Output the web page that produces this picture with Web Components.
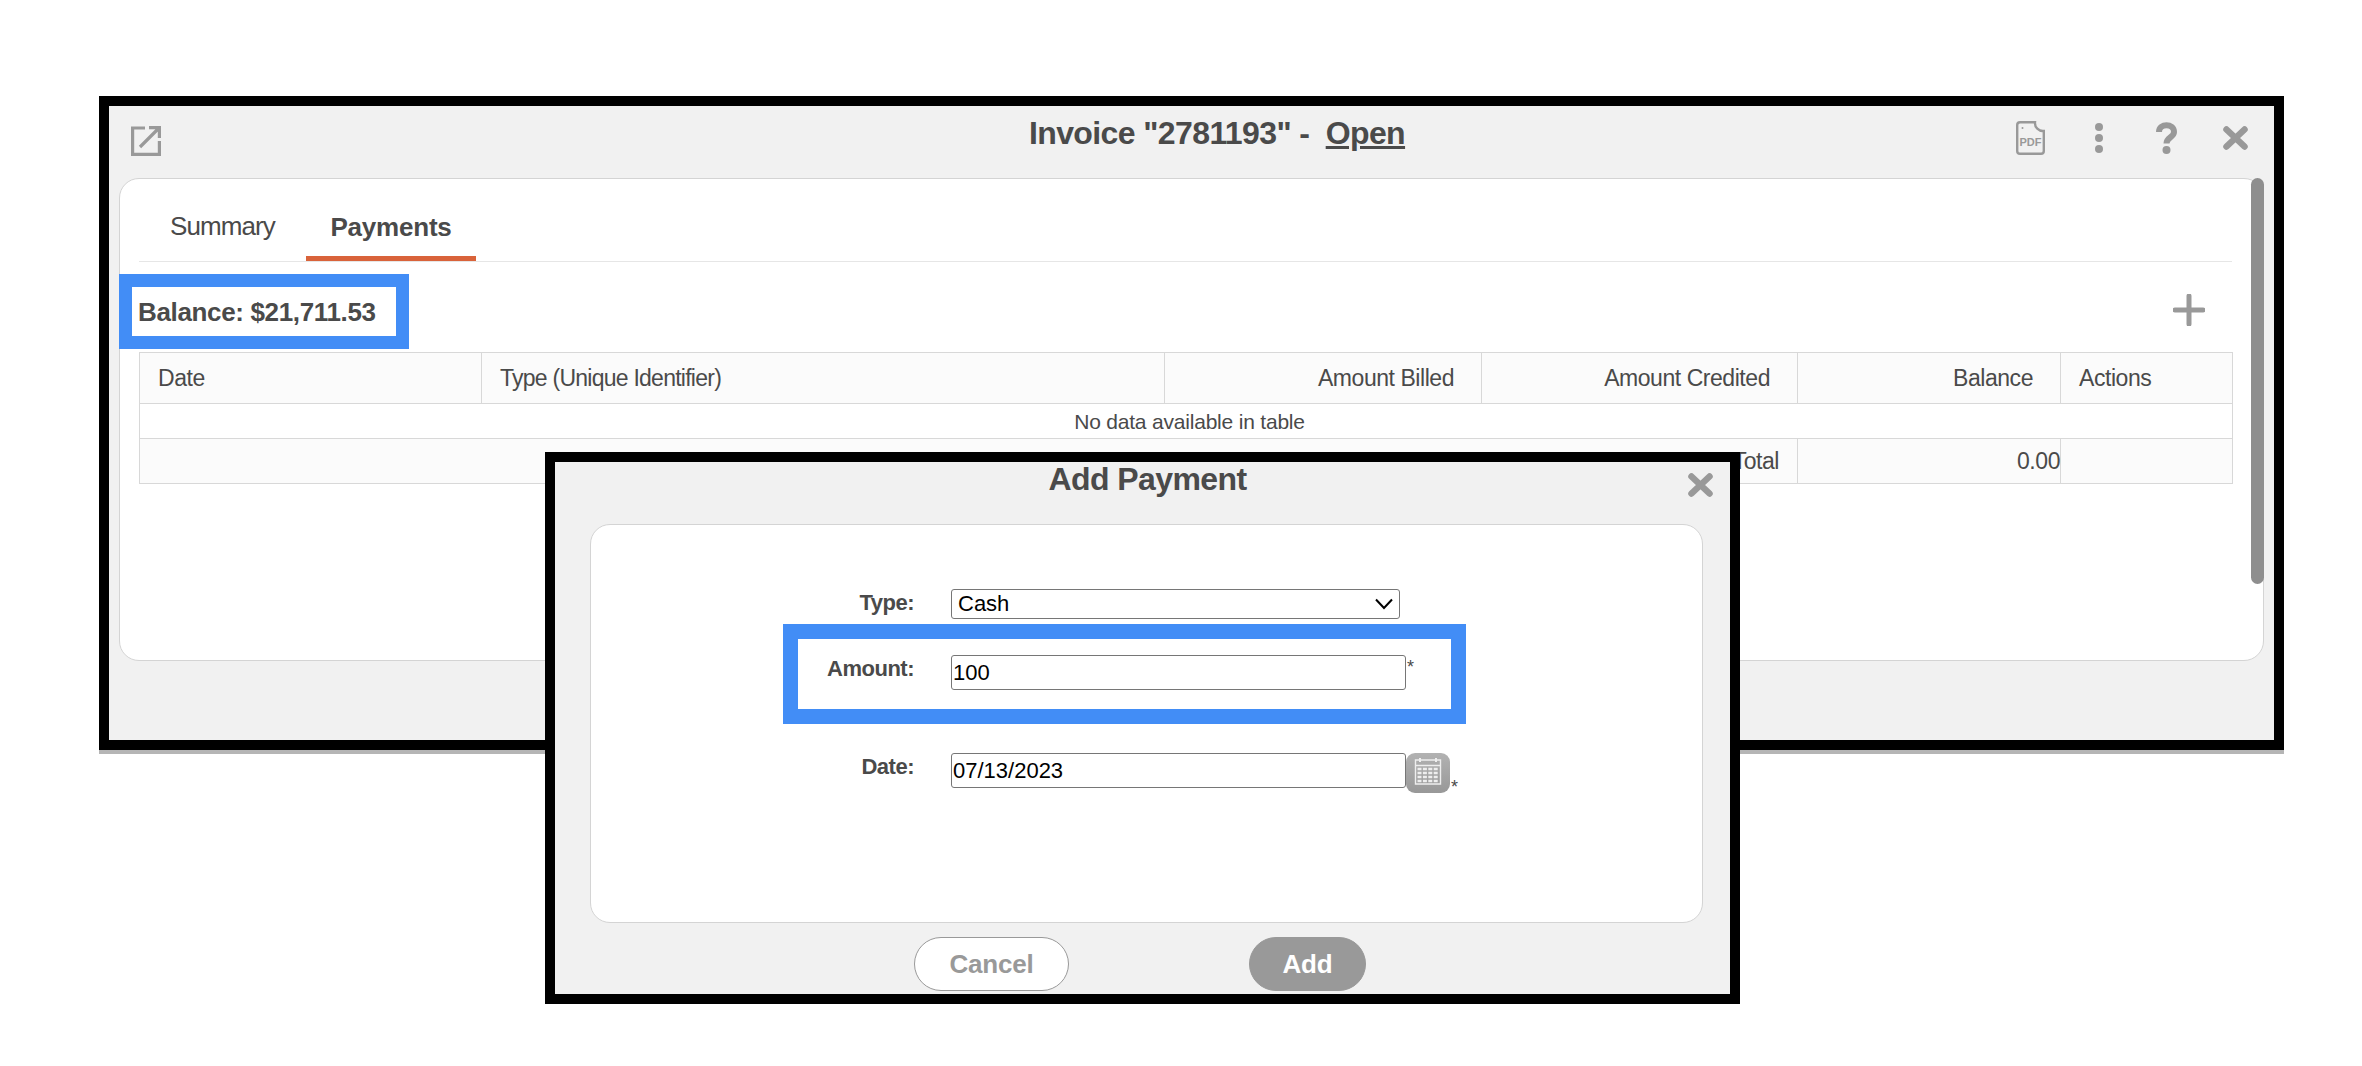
<!DOCTYPE html>
<html>
<head>
<meta charset="utf-8">
<title>Invoice</title>
<style>
  html, body { margin: 0; padding: 0; background: #fff; }
  body { width: 2362px; height: 1066px; position: relative; overflow: hidden; font-family: "Liberation Sans", Arial, sans-serif; color: #4a4a4a; }
</style>
</head>
<body>
<invoice-window>
  <window-header slot="header"></window-header>
  <payments-panel></payments-panel>
</invoice-window>
<payment-dialog></payment-dialog>

<script>
const CLOSE_ICON = `<svg class="close" width="25" height="24" viewBox="0 0 25 24"><path d="M3.5 3.500 L21.500 20.500 M21.500 3.500 L3.500 20.500" stroke="#999" stroke-width="6.500" stroke-linecap="round"/></svg>`;

class InvoiceWindow extends HTMLElement {
  constructor() {
    super();
    this.attachShadow({ mode: "open" }).innerHTML = `
      <style>
        :host {
          display: flex;
          flex-direction: column;
          position: absolute;
          left: 99px;
          top: 96px;
          width: 2185px;
          height: 654px;
          box-sizing: border-box;
          border: 10px solid #000;
          background: #f1f1f1;
          box-shadow: 0 4px 0 #b5b5b5;
        }
      </style>
      <slot name="header"></slot>
      <slot></slot>
    `;
  }
}

class WindowHeader extends HTMLElement {
  constructor() {
    super();
    this.attachShadow({ mode: "open" }).innerHTML = `
      <style>
        :host {
          display: flex;
          align-items: center;
          justify-content: space-between;
          height: 72px;
          box-sizing: border-box;
          padding: 0 26px 8px 22px;
          position: relative;
        }
        .title {
          position: absolute;
          left: 51px;
          right: 0;
          top: 9px;
          text-align: center;
          font-size: 32px;
          font-weight: bold;
          letter-spacing: -0.6px;
          color: #4a4a4a;
        }
        .title u { margin-left: 8px; }
        .icons { display: flex; align-items: center; position: relative; }
        svg { display: block; }
        .open { margin-top: 6px; }
        .pdf { margin-right: 50px; }
        .dots { margin-right: 53px; }
        .help { margin-right: 46px; }
      </style>
      <svg class="open" width="30" height="30" viewBox="0 0 30 30" fill="none" stroke="#999" stroke-width="3.200">
        <path d="M14 2 H1.600 V28.400 H28.400 V15"/>
        <path d="M9 21 L27.500 2.500 M18 1.600 H28.400 V12"/>
      </svg>
      <div class="title">Invoice "2781193" - <u>Open</u></div>
      <div class="icons">
        <svg class="pdf" width="29" height="34" viewBox="0 0 29 34" fill="none" stroke="#999" stroke-width="2.400">
          <path d="M4 1.200 H19 A8 8 0 0 0 27.800 10 V30 Q27.800 32.800 25 32.800 H4 Q1.200 32.800 1.200 30 V4 Q1.200 1.200 4 1.200 Z"/>
          <circle cx="6.500" cy="7" r="1" fill="#999" stroke="none"/>
          <text x="14.500" y="25" text-anchor="middle" font-family="Liberation Sans, Arial, sans-serif" font-size="11" font-weight="bold" fill="#999" stroke="none">PDF</text>
        </svg>
        <svg class="dots" width="8" height="30" viewBox="0 0 8 30" fill="#999"><circle cx="4" cy="4" r="4"/><circle cx="4" cy="15" r="4"/><circle cx="4" cy="26" r="4"/></svg>
        <svg class="help" width="21" height="32" viewBox="0 0 21 32" fill="none"><path d="M3 10 C3 1 18 1 18 10 C18 15.500 10.500 15 10.500 21.500" stroke="#999" stroke-width="6"/><circle cx="10.500" cy="28" r="4" fill="#999"/></svg>
        ${CLOSE_ICON}
      </div>
    `;
  }
}

class PaymentsPanel extends HTMLElement {
  constructor() {
    super();
    this.attachShadow({ mode: "open" }).innerHTML = `
      <style>
        :host {
          display: block;
          position: relative;
          margin: 0 10px;
          height: 483px;
          box-sizing: border-box;
          background: #fff;
          border: 1px solid #d4d4d4;
          border-radius: 20px;
          padding: 0 31px 0 19px;
        }
        .scroll {
          position: absolute;
          top: -1px;
          right: -1px;
          width: 13px;
          height: 406px;
          background: #8e8e8e;
          border-radius: 7px;
        }
        .tabs {
          display: flex;
          align-items: flex-end;
          height: 82px;
          border-bottom: 1px solid #e6e6e6;
          font-size: 26px;
        }
        .tab { width: 136px; padding: 0 0 19px 31px; letter-spacing: -0.9px; }
        .tab.on {
          width: 170px;
          padding: 0 0 13px;
          text-align: center;
          font-weight: bold;
          letter-spacing: -0.2px;
          border-bottom: 5px solid #d9633a;
        }
        .bar {
          display: flex;
          align-items: flex-start;
          justify-content: space-between;
          height: 90px;
        }
        .balance {
          margin-left: -20px;
          margin-top: 12px;
          width: 290px;
          height: 75px;
          box-sizing: border-box;
          border: 13px solid #428df6;
          font-size: 26px;
          font-weight: bold;
          line-height: 51px;
          white-space: nowrap;
          letter-spacing: -0.35px;
          text-indent: 6px;
        }
        .plus { margin: 32px 27px 0 0; display: block; }
        table {
          width: 2093px;
          border-collapse: collapse;
          table-layout: fixed;
          font-size: 23px;
          color: #4a4a4a;
        }
        td, th { border: 1px solid #d8d8d8; font-weight: normal; padding: 0 18px; text-align: left; letter-spacing: -0.45px; white-space: nowrap; }
        thead th { height: 50px; background: #fbfbfb; }
        th.type { letter-spacing: -0.75px; }
        .r { text-align: right; padding-right: 27px; }
        .empty { height: 32px; text-align: center; padding: 2px 0 0 7px; font-size: 21px; letter-spacing: -0.2px; }
        tfoot td { height: 44px; background: #fbfbfb; }
        tfoot .total { text-align: right; padding-right: 18px; }
        tfoot .num { text-align: right; padding-right: 0; }
      </style>
      <div class="tabs">
        <div class="tab">Summary</div>
        <div class="tab on">Payments</div>
      </div>
      <div class="bar">
        <div class="balance">Balance: $21,711.53</div>
        <svg class="plus" width="32" height="32" viewBox="0 0 32 32"><path d="M16 2 V30 M2 16 H30" stroke="#999" stroke-width="5" stroke-linecap="round"/></svg>
      </div>
      <table>
        <colgroup>
          <col style="width:342px"><col style="width:683px"><col style="width:317px">
          <col style="width:316px"><col style="width:263px"><col style="width:172px">
        </colgroup>
        <thead>
          <tr>
            <th>Date</th>
            <th class="type">Type (Unique Identifier)</th>
            <th class="r">Amount Billed</th>
            <th class="r">Amount Credited</th>
            <th class="r">Balance</th>
            <th>Actions</th>
          </tr>
        </thead>
        <tbody>
          <tr><td class="empty" colspan="6">No data available in table</td></tr>
        </tbody>
        <tfoot>
          <tr>
            <td class="total" colspan="4">Total</td>
            <td class="num">0.00</td>
            <td></td>
          </tr>
        </tfoot>
      </table>
      <div class="scroll"></div>
    `;
  }
}

class FormRow extends HTMLElement {
  constructor() {
    super();
    const label = this.getAttribute("label");
    this.attachShadow({ mode: "open" }).innerHTML = `
      <style>
        :host {
          display: grid;
          grid-template-columns: var(--label-width, 323px) 1fr;
          column-gap: 37px;
          align-items: start;
        }
        label {
          text-align: right;
          font-size: 22px;
          font-weight: bold;
          letter-spacing: -0.5px;
          color: #4a4a4a;
          padding-top: 1px;
        }
        .field { display: flex; align-items: flex-start; }
      </style>
      <label>${label}:</label>
      <div class="field"><slot></slot></div>
    `;
  }
}

class CalendarIcon extends HTMLElement {
  constructor() {
    super();
    this.attachShadow({ mode: "open" }).innerHTML = `
      <style>
        :host { display: block; width: 44px; height: 40px; }
        svg { display: block; }
      </style>
      <svg width="44" height="40" viewBox="0 0 44 40">
        <defs><linearGradient id="cal" x1="0" y1="0" x2="0" y2="1"><stop offset="0" stop-color="#b2b2b2"/><stop offset="1" stop-color="#989898"/></linearGradient></defs>
        <rect width="44" height="40" rx="9" fill="url(#cal)"/>
        <path d="M9.500 7 H34.500 V31 H9.500 Z M9.500 12.500 H34.500" fill="none" stroke="#eee" stroke-width="1.400"/>
        <path d="M14 5 V9 M30 5 V9" stroke="#eee" stroke-width="2"/>
        <path d="M11.500 16 H33 M11.500 20 H33 M11.500 24 H33 M11.500 28 H33" stroke="#eee" stroke-width="2.600" stroke-dasharray="4 1.400"/>
      </svg>
    `;
  }
}

class PaymentDialog extends HTMLElement {
  constructor() {
    super();
    this.attachShadow({ mode: "open" }).innerHTML = `
      <style>
        :host {
          display: flex;
          flex-direction: column;
          position: absolute;
          left: 545px;
          top: 452px;
          width: 1195px;
          height: 552px;
          box-sizing: border-box;
          border: 10px solid #000;
          background: #f1f1f1;
        }
        header {
          height: 62px;
          box-sizing: border-box;
          display: flex;
          align-items: flex-start;
          justify-content: center;
          position: relative;
          font-size: 32px;
          font-weight: bold;
          letter-spacing: -0.6px;
          color: #4a4a4a;
          line-height: 35px;
          padding-left: 10px;
        }
        header .close { position: absolute; right: 17px; top: 11px; }
        .card {
          margin: 0 27px 0 35px;
          height: 399px;
          box-sizing: border-box;
          background: #fff;
          border: 1px solid #d4d4d4;
          border-radius: 20px;
          padding-top: 64px;
          display: flex;
          flex-direction: column;
          color: #000;
        }
        .ctl {
          box-sizing: border-box;
          font-family: "Liberation Sans", Arial, sans-serif;
          font-size: 22px;
          color: #000;
          background: #fff;
          border: 1px solid #767676;
          border-radius: 3px;
          height: 35px;
          width: 455px;
          padding: 0 1px;
          margin: 0;
        }
        .sel {
          width: 449px;
          height: 30px;
          display: flex;
          align-items: center;
          justify-content: space-between;
          padding: 0 6px;
        }
        .star { font-size: 18px; color: #4a4a4a; margin-left: 1px; line-height: 20px; margin-top: 2px; }
        .amount {
          --label-width: 116px;
          width: 683px;
          height: 100px;
          box-sizing: border-box;
          border: 15px solid #428df6;
          margin: 5px 0 29px 192px;
          padding-top: 16px;
        }
        footer {
          flex: 1;
          display: flex;
          justify-content: flex-start;
          align-items: flex-start;
          padding: 14px 0 0 359px;
          gap: 180px;
        }
        .btn {
          height: 54px;
          box-sizing: border-box;
          border-radius: 27px;
          font-size: 26px;
          font-weight: bold;
          line-height: 52px;
          text-align: center;
          letter-spacing: -0.2px;
        }
        .cancel { width: 155px; background: #fff; border: 1px solid #999; color: #999; }
        .add { width: 117px; background: #999; border: 1px solid #999; color: #fff; }
      </style>
      <header>Add Payment ${CLOSE_ICON}</header>
      <div class="card">
        <form-row label="Type">
          <div class="ctl sel">Cash <svg width="18" height="12" viewBox="0 0 18 12" fill="none" stroke="#000" stroke-width="2"><path d="M1 1.500 L9 10 L17 1.500"/></svg></div>
        </form-row>
        <div class="amount">
          <form-row label="Amount">
            <input class="ctl" value="100"><span class="star">*</span>
          </form-row>
        </div>
        <form-row label="Date">
          <input class="ctl" value="07/13/2023"><calendar-icon></calendar-icon><span class="star" style="margin-top:24px">*</span>
        </form-row>
      </div>
      <footer>
        <div class="btn cancel">Cancel</div>
        <div class="btn add">Add</div>
      </footer>
    `;
  }
}

customElements.define("invoice-window", InvoiceWindow);
customElements.define("window-header", WindowHeader);
customElements.define("payments-panel", PaymentsPanel);
customElements.define("form-row", FormRow);
customElements.define("calendar-icon", CalendarIcon);
customElements.define("payment-dialog", PaymentDialog);
</script>
</body>
</html>
